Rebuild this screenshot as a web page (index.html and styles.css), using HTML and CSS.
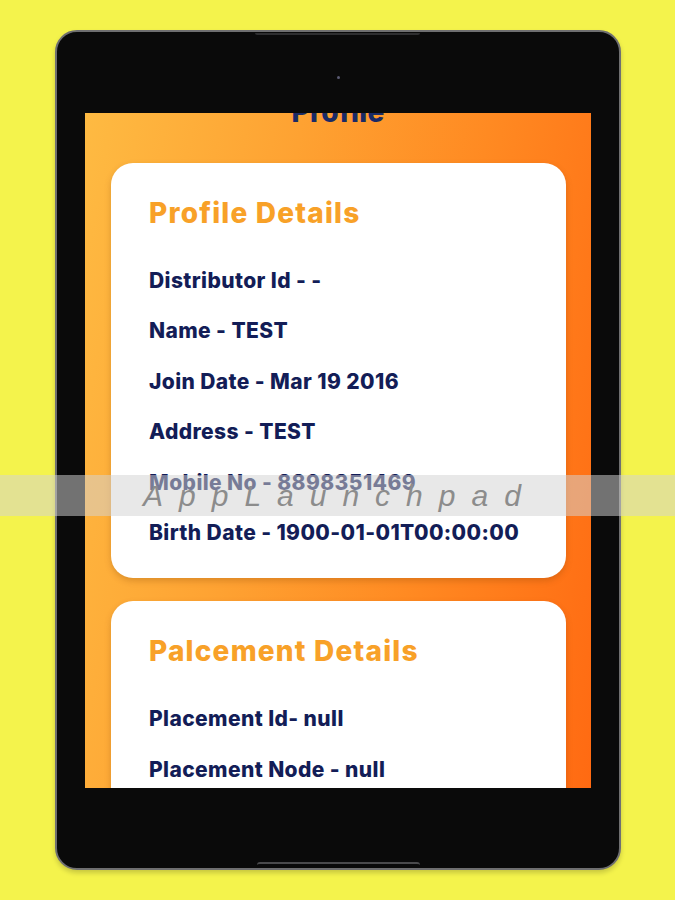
FILE: index.html
```html
<!DOCTYPE html>
<html lang="en">
<head>
  <meta charset="UTF-8" />
  <title>Profile</title>
  <link rel="stylesheet" href="styles.css">
</head>
<body>

  <div class="tablet">
    <div class="notch-top"></div>
    <div class="camera"></div>

    <div class="screen">
      <div class="page">
        <h1 class="title">Profile</h1>

        <div class="card">
          <h2 class="card-title">Profile Details</h2>
          <ul class="rows">
            <li>Distributor Id - -</li>
            <li>Name - TEST</li>
            <li>Join Date - Mar 19 2016</li>
            <li>Address - TEST</li>
            <li>Mobile No - 8898351469</li>
            <li>Birth Date - 1900-01-01T00:00:00</li>
          </ul>
        </div>

        <div class="card">
          <h2 class="card-title">Palcement Details</h2>
          <ul class="rows">
            <li>Placement Id- null</li>
            <li>Placement Node - null</li>
          </ul>
        </div>
      </div>
    </div>

    <div class="notch-bottom"></div>
  </div>

  <div class="watermark">AppLaunchpad</div>

</body>
</html>
```

FILE: styles.css
```css
body {
  margin: 0;
  background-color: #f4f34c;
  font-family: "Inter", "Noto Sans", sans-serif;
  height: 900px;
  overflow: hidden;
  position: relative;
}
.tablet {
  position: relative;
  box-sizing: border-box;
  width: 566px;
  height: 840px;
  margin: 30px 0 0 55px;
  padding: 81px 28px 0;
  background-color: #0a0a0a;
  border: 2px solid #6f6f70;
  border-radius: 22px;
  box-shadow: 0 3px 5px rgba(0, 0, 0, 0.18);
}
.notch-top {
  position: absolute;
  top: 1px;
  left: 198px;
  width: 165px;
  height: 2px;
  background-color: #2e2e30;
  border-radius: 0 0 3px 3px;
}
.notch-bottom {
  position: absolute;
  bottom: 1px;
  left: 200px;
  width: 163px;
  height: 3px;
  border-top: 2px solid #4a4a4c;
  border-radius: 3px 3px 0 0;
}
.camera {
  position: absolute;
  top: 44px;
  left: 280px;
  width: 3px;
  height: 3px;
  border-radius: 50%;
  background-color: #5a5a72;
}
.screen {
  height: 675px;
  overflow: hidden;
  background: linear-gradient(100deg, #feba42 0%, #fea232 35%, #ff8a22 65%, #ff6a12 100%);
}
.page {
  margin-top: -26px;
}
.title {
  margin: 0 0 26px;
  line-height: 50px;
  font-size: 28px;
  font-weight: 800;
  text-align: center;
  letter-spacing: 0.3px;
  color: #1a2a66;
}
.card {
  margin: 0 25px 23px 26px;
  padding: 30px 20px 20px 38px;
  background-color: white;
  border-radius: 22px;
  box-shadow: 0 3px 6px rgba(120, 60, 0, 0.25);
}
.card-title {
  margin: 0 0 23px;
  line-height: 40px;
  font-size: 28px;
  font-weight: 800;
  letter-spacing: 1.2px;
  color: #f8a128;
}
.rows {
  list-style: none;
  margin: 0;
  padding: 0;
}
.rows li {
  line-height: 50.4px;
  font-size: 21px;
  font-weight: 800;
  letter-spacing: 0.4px;
  color: #131d57;
}
.watermark {
  position: absolute;
  top: 475px;
  left: 0;
  width: 100%;
  height: 41px;
  background-color: rgba(211, 211, 211, 0.52);
  box-sizing: border-box;
  padding-left: 143px;
  line-height: 41px;
  font-family: "Liberation Sans", sans-serif;
  font-style: italic;
  font-size: 30px;
  letter-spacing: 16px;
  color: #8c8c8c;
}
```
